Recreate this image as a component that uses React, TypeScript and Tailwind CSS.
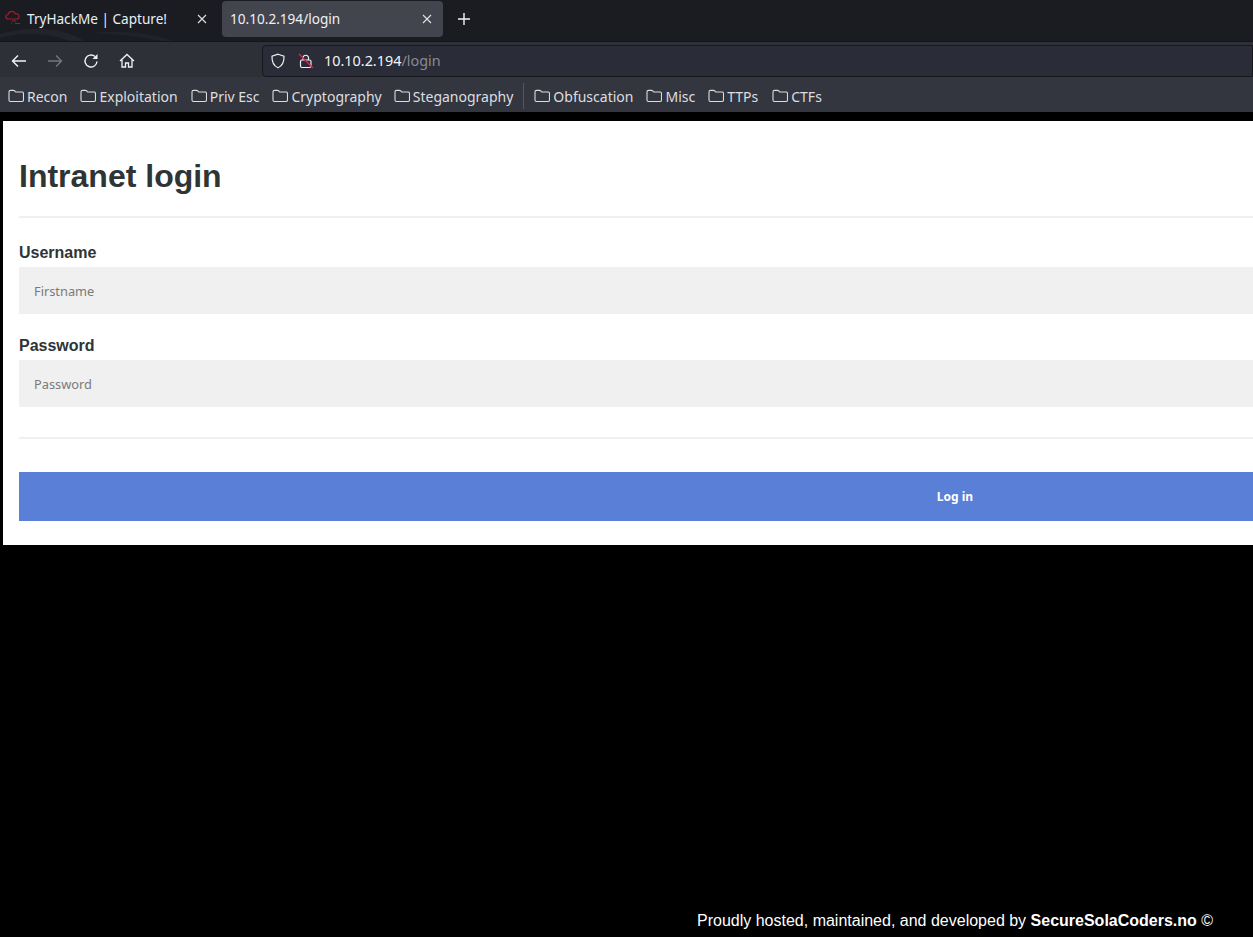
import React from "react";

const Folder = () => (
  <svg width="16" height="16" viewBox="0 0 16 16" fill="none" stroke="#dcdcde" strokeWidth="1.1" className="shrink-0">
    <path d="M1 4c0-1 .6-1.600 1.500-1.600h3c.6 0 .9.2 1.300.6l.9 1h6.300c.9 0 1.500.6 1.500 1.500v6.400c0 1-.6 1.600-1.500 1.600h-11C1.600 13.500 1 12.900 1 12z" />
  </svg>
);

const Close = () => (
  <svg width="10" height="10" viewBox="0 0 10 10" stroke="#e2e2e4" strokeWidth="1.1" fill="none">
    <path d="M1 1l8 8M9 1l-8 8" />
  </svg>
);

const Mark = ({ label }: { label: string }) => (
  <div className="flex items-center gap-[3px]">
    <Folder />
    <span>{label}</span>
  </div>
);

export default function App() {
  return (
    <div className="relative h-[937px] w-[1253px] overflow-hidden bg-black font-['Liberation_Sans',sans-serif]">
      <div className="font-['Noto_Sans',sans-serif]">
        <div className="relative flex h-[41px] items-start bg-[#1b1c21] pt-[1px]">
          <svg width="230" height="41" viewBox="0 0 230 41" fill="none" className="absolute left-0 top-0">
            <path d="M0 34C30 26 60 26 85 41H70C50 33 25 31 0 38z" fill="#23242a" />
            <path d="M90 33c30-3 60 0 85 8h-14c-22-5-45-7-71-8z" fill="#212228" />
          </svg>
          <div className="relative flex h-[36px] w-[219px] items-center pl-[5px] pr-[12px] text-[13.6px] text-[#e6f0f7]">
            <svg width="18" height="18" viewBox="0 0 18 18" fill="none" stroke="#a01c2c" strokeWidth="1.2" className="mr-[4px] -mt-[1px] shrink-0">
              <path d="M3.500 9C1.800 9 .8 8 .8 6.700.8 5.400 1.800 4.500 3 4.500 3.500 2.500 5 1.300 6.800 1.300c1.700 0 3 1 3.500 2.500 2-.4 3.700.8 3.700 2.700C14 8 12.800 9 11.500 9z" />
              <path d="M7 11h4M10 13.500h5M6 13h1" />
            </svg>
            <span className="flex-1 whitespace-nowrap">TryHackMe | Capture!</span>
            <Close />
          </div>
          <div className="relative ml-[3px] flex h-[36px] w-[221px] items-center justify-between rounded-[4px] bg-[#42444e] pl-[8px] pr-[11px] text-[13.6px] text-[#f0f0f2]">
            <span>10.10.2.194/login</span>
            <Close />
          </div>
          <div className="relative flex h-[36px] w-[42px] items-center justify-center">
            <svg width="12" height="12" viewBox="0 0 12 12" stroke="#f5f5f5" strokeWidth="1.400" fill="none">
              <path d="M6 0v12M0 6h12" />
            </svg>
          </div>
        </div>

        <div className="flex h-[36px] items-start border-t border-[#14151a] bg-[#2e3038] pl-[11px] pt-[3px]">
          <div className="flex h-[32px] w-[251px] items-center">
            <svg width="16" height="16" viewBox="0 0 16 16" fill="none" stroke="#f2f2f4" strokeWidth="1.400">
              <path d="M15 8H1.500M7 2.500L1.500 8 7 13.500" />
            </svg>
            <svg width="16" height="16" viewBox="0 0 16 16" fill="none" stroke="#74767c" strokeWidth="1.400" className="ml-[20px]">
              <path d="M1 8h13.500M9 2.500L14.500 8 9 13.500" />
            </svg>
            <svg width="16" height="16" viewBox="0 0 16 16" fill="none" stroke="#f2f2f4" strokeWidth="1.400" className="ml-[20px]">
              <path d="M14 8.500a6 6 0 1 1-2-5" />
              <path d="M14.500 1v5h-5z" fill="#f2f2f4" stroke="none" />
            </svg>
            <svg width="16" height="16" viewBox="0 0 16 16" fill="none" stroke="#f2f2f4" strokeWidth="1.300" className="ml-[20px]">
              <path d="M1 8l7-6.500L15 8M3 6.500V14h3.500v-4h3v4H13V6.500" />
            </svg>
          </div>
          <div className="flex h-[32px] flex-1 items-center rounded-l-[4px] border border-[#17181d] bg-[#2a2c38] pl-[7px] text-[14.4px]">
            <svg width="16" height="16" viewBox="0 0 16 16" fill="none" stroke="#f0f0f2" strokeWidth="1.200">
              <path d="M8 1.200l6 2c.2 5-1.500 9.500-6 11.600C3.500 12.700 1.800 8.200 2 3.200z" />
            </svg>
            <svg width="16" height="16" viewBox="0 0 16 16" fill="none" className="ml-[12px]">
              <rect x="2.500" y="7" width="10.500" height="7.500" rx="1.500" stroke="#f0f0f2" strokeWidth="1.200" />
              <path d="M5 7V4.500a2.800 2.800 0 0 1 5.500 0V7" stroke="#f0f0f2" strokeWidth="1.200" />
              <path d="M1 1l14 14" stroke="#e0224a" strokeWidth="1.400" />
            </svg>
            <span className="ml-[10px] text-[#f3f3f5]">10.10.2.194</span>
            <span className="text-[#888a93]">/login</span>
          </div>
        </div>

        <div className="flex h-[35px] items-center bg-[#33363e] pl-[8px] pt-[3px] text-[14px] text-[#dedee0]">
          <Mark label="Recon" />
          <div className="ml-[13px]"><Mark label="Exploitation" /></div>
          <div className="ml-[13px]"><Mark label="Priv Esc" /></div>
          <div className="ml-[13px]"><Mark label="Cryptography" /></div>
          <div className="ml-[12px]"><Mark label="Steganography" /></div>
          <div className="ml-[10px] mr-[10px] h-[26px] w-px bg-[#54575e]" />
          <Mark label="Obfuscation" />
          <div className="ml-[13px]"><Mark label="Misc" /></div>
          <div className="ml-[13px]"><Mark label="TTPs" /></div>
          <div className="ml-[14px]"><Mark label="CTFs" /></div>
        </div>
      </div>

      <div className="ml-[3px] mt-[9px] h-[424px] w-[1904px] bg-white px-[16px] pt-[34px] text-[#2f3435]">
        <h1 className="pt-[3px] text-[32px] font-bold leading-[37px]">Intranet login</h1>
        <div className="mt-[21px] h-[2px] bg-[#f0f0f0]" />
        <label className="mt-[26px] block text-[16px] font-bold leading-[18px]">Username</label>
        <input
          placeholder="Firstname"
          className="mt-[5px] block h-[47px] w-full bg-[#f0f0f0] px-[15px] font-['Noto_Sans',sans-serif] text-[12.8px] outline-none placeholder:text-[#7a7a7a]"
        />
        <label className="mt-[23px] block text-[16px] font-bold leading-[18px]">Password</label>
        <input
          placeholder="Password"
          className="mt-[5px] block h-[47px] w-full bg-[#f0f0f0] px-[15px] font-['Noto_Sans',sans-serif] text-[12.8px] outline-none placeholder:text-[#7a7a7a]"
        />
        <div className="mt-[30px] h-[2px] bg-[#f0f0f0]" />
        <button className="mt-[33px] block h-[49px] w-full bg-[#5a7fd6] pt-[1px] font-['Noto_Sans',sans-serif] text-[12px] font-bold text-white">
          Log in
        </button>
      </div>

      <div className="absolute left-[697px] top-[912px] whitespace-nowrap text-[16px] leading-[18px] text-white">
        Proudly hosted, maintained, and developed by <b>SecureSolaCoders.no</b> ©
      </div>
    </div>
  );
}
